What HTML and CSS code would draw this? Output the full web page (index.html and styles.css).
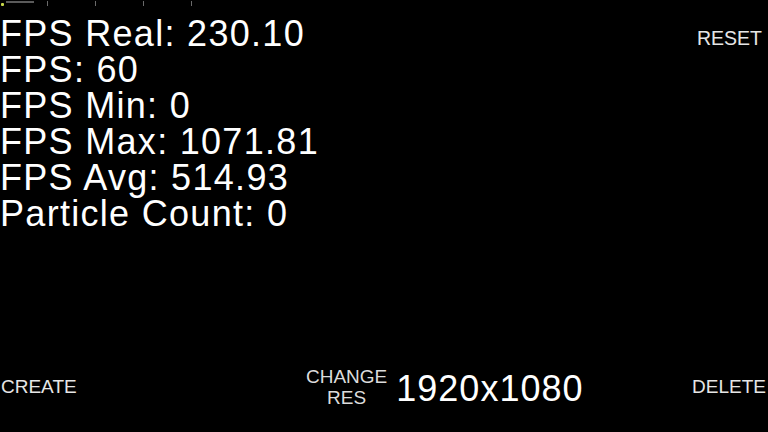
FILE: index.html
```html
<!DOCTYPE html>
<html>
<head>
<meta charset="utf-8">
<link rel="stylesheet" href="styles.css">
</head>
<body>
<div class="screen">
  <div class="debug">
    <span class="dot"></span>
    <span class="label"></span>
    <span class="tick t1"></span>
    <span class="tick"></span>
    <span class="tick"></span>
    <span class="tick"></span>
  </div>
  <div class="top">
    <div class="stats">
      <div>FPS Real: 230.10</div>
      <div>FPS: 60</div>
      <div>FPS Min: 0</div>
      <div>FPS Max: 1071.81</div>
      <div>FPS Avg: 514.93</div>
      <div>Particle Count: 0</div>
    </div>
    <div class="btn reset">RESET</div>
  </div>
  <div class="bottom">
    <div class="btn create">CREATE</div>
    <div class="res">
      <div class="btn change">CHANGE<br>RES</div>
      <div class="resval">1920x1080</div>
    </div>
    <div class="btn delete">DELETE</div>
  </div>
</div>
</body>
</html>
```
FILE: styles.css
```css
html, body {
  margin: 0;
  padding: 0;
  background: #000;
}
body {
  font-family: "Liberation Sans", Arial, sans-serif;
  color: #fff;
}
.screen {
  width: 768px;
  height: 432px;
  display: flex;
  flex-direction: column;
  overflow: hidden;
}
.debug {
  height: 6px;
  display: flex;
  align-items: flex-start;
}
.dot {
  width: 3px;
  height: 3px;
  margin: 3px 0 0 1px;
  background: #c8d84a;
  border-radius: 1px;
}
.label {
  width: 28px;
  height: 2px;
  margin: 1px 0 0 2px;
  background: #5a5a5a;
}
.tick {
  width: 1px;
  height: 5px;
  margin: 1px 0 0 47px;
  background: #6a6a6a;
}
.tick.t1 {
  margin-left: 13px;
}
.top {
  display: flex;
  justify-content: space-between;
  align-items: flex-start;
  padding-top: 10px;
}
.stats {
  font-size: 36px;
  line-height: 36px;
  letter-spacing: 1.3px;
}
.btn {
  font-size: 19px;
  line-height: 21px;
  color: #e6e6e6;
}
.reset {
  font-size: 19.5px;
  margin-top: 12px;
  padding-right: 6px;
}
.bottom {
  margin-top: auto;
  margin-bottom: 26px;
  height: 40px;
  display: grid;
  grid-template-columns: 306px auto 1fr;
  align-items: center;
}
.create {
  padding-left: 1px;
  padding-bottom: 6px;
}
.res {
  display: flex;
  align-items: center;
  gap: 9px;
}
.change {
  text-align: center;
  line-height: 21px;
  color: #dcdcdc;
  padding-bottom: 4px;
}
.resval {
  font-size: 36px;
  line-height: 40px;
  letter-spacing: 1px;
}
.delete {
  justify-self: end;
  padding-right: 2px;
  padding-bottom: 6px;
}
```
